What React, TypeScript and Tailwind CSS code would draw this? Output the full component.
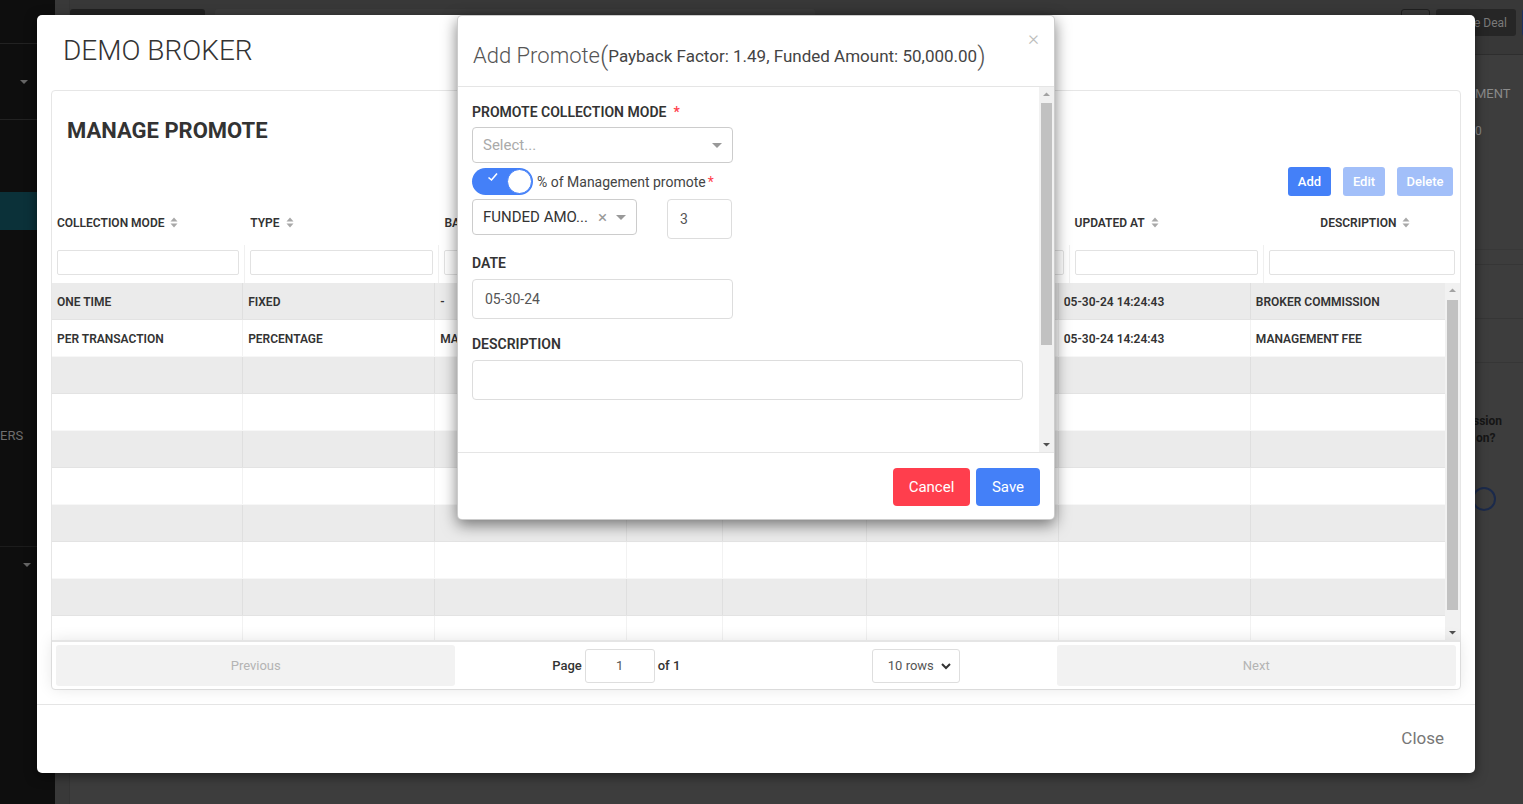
import React from 'react';

const COLS = 'grid-cols-[191fr_192fr_192fr_96fr_143fr_192fr_192fr_194fr]';

const HEADERS = [
  { label: 'COLLECTION MODE', center: false },
  { label: 'TYPE', center: false },
  { label: 'BASED ON', center: false },
  { label: 'VALUE', center: false },
  { label: 'STATUS', center: false },
  { label: 'CREATED AT', center: false },
  { label: 'UPDATED AT', center: false },
  { label: 'DESCRIPTION', center: true },
];

const ROWS = [
  ['ONE TIME', 'FIXED', '-', '500', 'ACTIVE', '05-30-24 14:24:43', '05-30-24 14:24:43', 'BROKER COMMISSION'],
  ['PER TRANSACTION', 'PERCENTAGE', 'MANAGEMENT FEE', '3', 'ACTIVE', '05-30-24 14:24:43', '05-30-24 14:24:43', 'MANAGEMENT FEE'],
];

function SortIcon() {
  return (
    <svg width="8" height="11" viewBox="0 0 8 11" className="ml-[6px] shrink-0">
      <path d="M4 0.5 L7.5 4.5 H0.5 Z" fill="#a8a8a8" />
      <path d="M4 10.5 L7.5 6.5 H0.5 Z" fill="#a8a8a8" />
    </svg>
  );
}

function Caret() {
  return (
    <span className="inline-block w-0 h-0 border-l-[5px] border-r-[5px] border-t-[5px] border-l-transparent border-r-transparent border-t-[#999]" />
  );
}

function FakeScrollbar({ thumbTop, thumbBottom }: { thumbTop: number; thumbBottom: number }) {
  return (
    <div className="relative w-[15px] h-full bg-[#f1f1f1] shrink-0">
      <svg width="15" height="15" viewBox="0 0 15 15" className="absolute top-0 left-0">
        <path d="M4 9 L7.5 5.5 L11 9 Z" fill="#a3a3a3" />
      </svg>
      <div className="absolute left-[2px] right-[2px] bg-[#c1c1c1]" style={{ top: thumbTop, bottom: thumbBottom }} />
      <svg width="15" height="15" viewBox="0 0 15 15" className="absolute bottom-0 left-0">
        <path d="M4 6 L7.5 9.5 L11 6 Z" fill="#505050" />
      </svg>
    </div>
  );
}

function BackgroundPage() {
  return (
    <div className="absolute inset-0 flex bg-[#3d3d3d]">
      {/* sidebar */}
      <div className="w-[55px] h-full bg-[#0e0e0e] flex flex-col">
        <div className="h-[44px] border-b border-[#222]" />
        <div className="h-[76px] border-b border-[#222] flex items-center justify-end pr-[27px]">
          <span className="inline-block w-0 h-0 border-l-[4px] border-r-[4px] border-t-[4px] border-l-transparent border-r-transparent border-t-[#666]" />
        </div>
        <div className="h-[72px]" />
        <div className="h-[38px] bg-[#0b3139]" />
        <div className="h-[199px]" />
        <div className="text-[13px] text-[#6f6f6f] leading-none">ERS</div>
        <div className="h-[104px]" />
        <div className="border-t border-[#1c1c1c] h-[36px] flex items-center justify-end pr-[24px]">
          <span className="inline-block w-0 h-0 border-l-[4px] border-r-[4px] border-t-[4px] border-l-transparent border-r-transparent border-t-[#666]" />
        </div>
      </div>
      <div className="w-[15px] h-full bg-[#393939] border-r border-[#353535]" />
      {/* main */}
      <div className="flex-1 flex flex-col">
        <div className="h-[55px] bg-[#383838] border-b border-[#2e2e2e] flex items-start pt-[9px] gap-[6px]">
          <div className="w-[135px] h-[27px] bg-[#212121] rounded-[3px]" />
          <div className="w-[600px] h-[27px] bg-[#3c3c3c] rounded-[3px] ml-[4px]" />
          <div className="flex-1" />
          <div className="w-[29px] h-[27px] border border-[#1f1f1f] rounded-[3px]" />
          <div className="w-[80px] h-[27px] bg-[#262626] rounded-[3px] text-[12px] text-[#7a7a7a] whitespace-nowrap flex items-center justify-end pr-[9px]">Create Deal</div>
          <div className="w-[6px] h-[27px] bg-[#1c2f5e] rounded-l-[3px] -mr-[5px]" />
        </div>
        <div className="flex-1 flex justify-end">
          <div className="w-[48px] flex flex-col text-[#8a8a8a] text-[13px]">
            <div className="pt-[32px] leading-none">MENT</div>
            <div className="pt-[25px] leading-none text-[12px]">0</div>
            <div className="mt-[112px] border-t border-[#383838]" />
            <div className="mt-[14px] border-t border-[#363636]" />
            <div className="mt-[53px] border-t border-[#363636]" />
            <div className="mt-[43px] border-t border-[#363636]" />
            <div className="mt-[50px] font-bold text-[12px] text-[#151515] leading-[17px]">
              <div className="-ml-[2px]">ssion</div>
              <div className="ml-[1px]">on?</div>
            </div>
            <div className="mt-[40px] -ml-[3px] w-[24px] h-[24px] rounded-full border-2 border-[#1b2a4b]" />
          </div>
        </div>
      </div>
    </div>
  );
}

function ManagePromoteModal() {
  return (
    <div className="absolute left-[37px] top-[15px] w-[1438px] h-[758px] bg-white rounded-[5px] shadow-[0_3px_12px_rgba(0,0,0,0.5)] flex flex-col">
      <div className="h-[75px] pl-[26px] flex items-center pb-[4px]">
        <h1 className="text-[28px] font-light text-[#333] leading-none">DEMO BROKER</h1>
      </div>
      <div className="px-[14px] pb-[14px] border-b border-[#e5e5e5]">
        <div className="border border-[#e6e6e6] rounded-[4px] flex flex-col">
          <div className="pl-[15px] pt-[27px] h-[52px]">
            <h2 className="text-[22px] font-bold text-[#333] leading-[26px]">MANAGE PROMOTE</h2>
          </div>
          <div className="mt-[24px] h-[29px] flex justify-end pr-[7px] gap-[12px]">
            <button className="w-[43px] h-[29px] bg-[#4480f8] text-white text-[13px] font-medium rounded-[3px]">Add</button>
            <button className="w-[42px] h-[29px] bg-[#a2bff9] text-white text-[13px] font-medium rounded-[3px]">Edit</button>
            <button className="w-[56px] h-[29px] bg-[#a2bff9] text-white text-[13px] font-medium rounded-[3px]">Delete</button>
          </div>
          {/* table header */}
          <div className={`mt-[4px] grid ${COLS} h-[45px]`}>
            {HEADERS.map((h) => (
              <div key={h.label} className={`flex items-center px-[5px] overflow-hidden ${h.center ? 'justify-center pl-[12px]' : ''}`}>
                <span className="text-[12px] font-semibold text-[#333] whitespace-nowrap">{h.label}</span>
                <SortIcon />
              </div>
            ))}
          </div>
          <div className={`grid ${COLS} h-[38px]`}>
            {HEADERS.map((h, i) => (
              <div key={h.label} className={`pt-[5px] px-[5px] ${i < 7 ? 'border-r border-[#f0f0f0]' : ''}`}>
                <div className="h-[25px] border border-[#e2e2e2] rounded-[2px] bg-white" />
              </div>
            ))}
          </div>
          {/* table body */}
          <div className="h-[357px] flex overflow-hidden">
            <div className="flex-1 flex flex-col overflow-hidden">
              {Array.from({ length: 10 }).map((_, r) => (
                <div key={r} className={`grid ${COLS} h-[37px] shrink-0 border-b border-black/[0.03] ${r % 2 === 0 ? 'bg-[#ebebeb]' : 'bg-white'}`}>
                  {Array.from({ length: 8 }).map((__, c) => (
                    <div key={c} className={`flex items-center px-[5px] pt-[1px] overflow-hidden ${c < 7 ? 'border-r border-black/[0.05]' : ''}`}>
                      <span className="text-[12px] font-semibold text-[#333] whitespace-nowrap">{ROWS[r] ? ROWS[r][c] : ''}</span>
                    </div>
                  ))}
                </div>
              ))}
            </div>
            <FakeScrollbar thumbTop={17} thumbBottom={30} />
          </div>
          {/* pagination */}
          <div className="h-[49px] flex items-center p-[3px] border-t-2 border-black/10 shadow-[0_0_15px_rgba(0,0,0,0.1)] rounded-b-[4px] relative">
            <div className="flex-[1] h-[41px] mx-[1px] bg-[#f2f2f2] rounded-[3px] flex items-center justify-center text-[13px] text-[#b4b4b4]">Previous</div>
            <div className="flex-[1.5] flex items-center justify-around">
              <div className="flex items-center gap-[3px] text-[13px] text-[#333]">
                <span className="font-medium">Page</span>
                <div className="w-[70px] h-[34px] border border-[#dedede] rounded-[3px] flex items-center justify-center text-[13px] text-[#555]">1</div>
                <span className="font-medium">of 1</span>
              </div>
              <div className="w-[88px] h-[34px] border border-[#dedede] rounded-[3px] flex items-center justify-between pl-[15px] pr-[8px] text-[13px] text-[#555]">
                <span>10 rows</span>
                <svg width="10" height="8" viewBox="0 0 10 8"><path d="M1 2 L5 6 L9 2" stroke="#333" strokeWidth="2" fill="none" /></svg>
              </div>
            </div>
            <div className="flex-[1] h-[41px] mx-[1px] bg-[#f2f2f2] rounded-[3px] flex items-center justify-center text-[13px] text-[#b4b4b4]">Next</div>
          </div>
        </div>
      </div>
      <div className="flex-1 flex items-center justify-end pr-[31px]">
        <button className="text-[17px] text-[#777]">Close</button>
      </div>
    </div>
  );
}

function Label({ children, required }: { children: React.ReactNode; required?: boolean }) {
  return (
    <div className="text-[14px] font-semibold text-[#333] leading-[17px]">
      {children}
      {required && <span className="text-[#ff3e4d] ml-[7px]">*</span>}
    </div>
  );
}

function AddPromoteModal() {
  return (
    <div className="absolute left-[457px] top-[15px] w-[598px] h-[505px] bg-white rounded-[5px] border border-black/20 shadow-[0_5px_15px_rgba(0,0,0,0.5)] flex flex-col">
      <div className="h-[71px] shrink-0 border-b border-[#e5e5e5] flex items-center pl-[15px] pt-[10px] relative">
        <span className="text-[22px] font-light text-[#555] leading-none">Add Promote</span>
        <span className="text-[26px] font-light text-[#555] leading-none">(</span>
        <span className="text-[17px] text-[#444] leading-none">Payback Factor: 1.49, Funded Amount: 50,000.00</span>
        <span className="text-[26px] font-light text-[#555] leading-none">)</span>
        <button className="absolute right-[15px] top-[12px] text-[21px] font-light text-[#bcbcbc] leading-none">×</button>
      </div>
      <div className="h-[365px] shrink-0 flex">
        <div className="flex-1 pl-[14px] pt-[17px]">
          <Label required>PROMOTE COLLECTION MODE</Label>
          <div className="mt-[6px] w-[261px] h-[36px] border border-[#ccc] rounded-[4px] flex items-center justify-between pl-[10px] pr-[10px]">
            <span className="text-[15px] text-[#aaa]">Select...</span>
            <Caret />
          </div>
          <div className="mt-[5px] flex items-center">
            <div className="relative w-[61px] h-[27px] rounded-full bg-[#4480f8]">
              <svg width="12" height="10" viewBox="0 0 12 10" className="absolute left-[15px] top-[4px]">
                <path d="M1.5 5.5 L4.5 8 L10 1.5" stroke="white" strokeWidth="1.6" fill="none" />
              </svg>
              <div className="absolute right-[1px] top-[1px] w-[25px] h-[25px] rounded-full bg-white border border-[#4480f8]" />
            </div>
            <span className="ml-[4px] pt-[2px] text-[14px] text-[#444]">% of Management promote</span>
            <span className="ml-[2px] pt-[2px] text-[14px] text-[#ff3e4d]">*</span>
          </div>
          <div className="mt-[4px] flex items-start gap-[30px]">
            <div className="w-[165px] h-[36px] border border-[#ccc] rounded-[4px] flex items-center pl-[10px] pr-[10px]">
              <span className="text-[15px] text-[#333] flex-1">FUNDED AMO...</span>
              <span className="text-[17px] text-[#999] leading-none mr-[9px]">×</span>
              <Caret />
            </div>
            <div className="w-[65px] h-[40px] border border-[#ddd] rounded-[4px] flex items-center pl-[12px] text-[14px] text-[#555]">3</div>
          </div>
          <div className="mt-[16px]">
            <Label>DATE</Label>
          </div>
          <div className="mt-[7px] w-[261px] h-[40px] border border-[#ddd] rounded-[4px] flex items-center pl-[12px] text-[14px] text-[#555]">05-30-24</div>
          <div className="mt-[17px]">
            <Label>DESCRIPTION</Label>
          </div>
          <div className="mt-[7px] w-[551px] h-[40px] border border-[#ddd] rounded-[4px]" />
        </div>
        <FakeScrollbar thumbTop={16} thumbBottom={107} />
      </div>
      <div className="flex-1 border-t border-[#e5e5e5] flex items-start justify-end pt-[15px] pr-[14px] gap-[6px]">
        <button className="w-[77px] h-[38px] bg-[#ff3e4d] text-white text-[15px] rounded-[4px]">Cancel</button>
        <button className="w-[64px] h-[38px] bg-[#4480f8] text-white text-[15px] rounded-[4px]">Save</button>
      </div>
    </div>
  );
}

export default function App() {
  return (
    <div className="relative w-[1523px] h-[804px] overflow-hidden font-['Roboto','Liberation_Sans',sans-serif]">
      <BackgroundPage />
      <ManagePromoteModal />
      <AddPromoteModal />
    </div>
  );
}
